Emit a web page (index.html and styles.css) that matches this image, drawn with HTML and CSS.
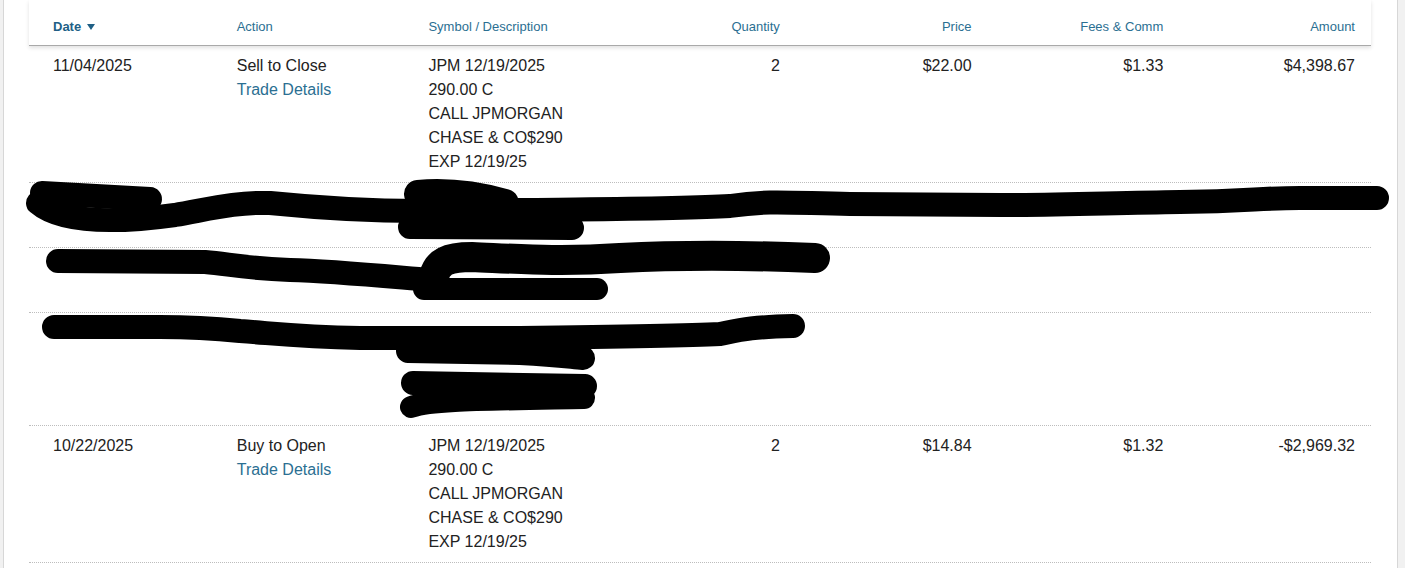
FILE: index.html
```html
<!DOCTYPE html>
<html lang="en">
<head>
<meta charset="utf-8">
<title>Transactions</title>
<link rel="stylesheet" href="styles.css">
</head>
<body>
<div class="panel">
  <div class="grid head">
    <div class="c first sorted">Date <svg class="caret" width="8" height="6" viewBox="0 0 8 6"><path d="M0 0H8L4 6Z" fill="#1f5f85"/></svg></div>
    <div class="c">Action</div>
    <div class="c">Symbol / Description</div>
    <div class="c r">Quantity</div>
    <div class="c r">Price</div>
    <div class="c r">Fees &amp; Comm</div>
    <div class="c r">Amount</div>
  </div>

  <div class="grid row">
    <div class="c first">11/04/2025</div>
    <div class="c">Sell to Close<br><a class="link" href="#">Trade Details</a></div>
    <div class="c">JPM 12/19/2025<br>290.00 C<br>CALL JPMORGAN<br>CHASE &amp; CO$290<br>EXP 12/19/25</div>
    <div class="c r">2</div>
    <div class="c r">$22.00</div>
    <div class="c r">$1.33</div>
    <div class="c r">$4,398.67</div>
  </div>

  <div class="grid row lines2">
    <div class="c first"></div><div class="c"></div><div class="c"></div>
    <div class="c r"></div><div class="c r"></div><div class="c r"></div><div class="c r"></div>
  </div>

  <div class="grid row lines2">
    <div class="c first"></div><div class="c"></div><div class="c"></div>
    <div class="c r"></div><div class="c r"></div><div class="c r"></div><div class="c r"></div>
  </div>

  <div class="grid row lines4">
    <div class="c first"></div><div class="c"></div><div class="c"></div>
    <div class="c r"></div><div class="c r"></div><div class="c r"></div><div class="c r"></div>
  </div>

  <div class="grid row">
    <div class="c first">10/22/2025</div>
    <div class="c">Buy to Open<br><a class="link" href="#">Trade Details</a></div>
    <div class="c">JPM 12/19/2025<br>290.00 C<br>CALL JPMORGAN<br>CHASE &amp; CO$290<br>EXP 12/19/25</div>
    <div class="c r">2</div>
    <div class="c r">$14.84</div>
    <div class="c r">$1.32</div>
    <div class="c r">-$2,969.32</div>
  </div>
</div>

<svg class="scribble" width="1405" height="568" viewBox="0 0 1405 568" aria-hidden="true">
  <g fill="none" stroke="#000" stroke-linecap="round" stroke-linejoin="round">
    <!-- row 2 -->
    <path stroke-width="24" d="M42 193 L150 199"/>
    <path stroke-width="24" d="M38 203 C60 222 110 224 175 215 C210 209 235 202 270 203 C320 208 360 211 420 211 L520 210 C600 209 680 209 730 206 C770 200 790 203 850 204 L1000 205 C1060 205 1110 203 1180 202 C1250 201 1260 198 1300 198 L1377 198"/>
    <path stroke-width="28" d="M418 194 C450 191 480 196 505 203"/>
    <path stroke-width="24" d="M410 227 L572 228"/>
    <!-- row 3 -->
    <path stroke-width="24" d="M58 261 L205 262 C230 264 240 268 290 270 C330 271 360 274 430 280"/>
    <path stroke-width="30" d="M434 276 C438 262 447 257 472 257 C520 259 560 262 620 258 C680 255 740 255 815 258"/>
    <path stroke-width="22" d="M424 289 L597 289"/>
    <!-- row 4 -->
    <path stroke-width="24" d="M54 327 L160 327 C200 327 220 329 240 331 C280 334 300 337 360 338 L520 338 C600 337 680 336 720 334 C740 330 750 327 793 326"/>
    <path stroke-width="24" d="M408 351 L520 353 C560 355 570 357 583 358"/>
    <path stroke-width="24" d="M413 383 L585 386"/>
    <path stroke-width="22" d="M411 407 C430 400 470 400 584 398"/>
  </g>
</svg>
</body>
</html>
```

FILE: styles.css
```css
html, body {
  margin: 0;
  padding: 0;
}

body {
  background: #f1f1f1;
  font-family: "Liberation Sans", Arial, sans-serif;
  color: #222;
  position: relative;
  height: 568px;
  overflow: hidden;
}

.panel {
  margin-left: 3px;
  width: 1344px;
  min-height: 568px;
  padding: 0 24px 0 25px;
  background: #fff;
  border-left: 1px solid #d7d7d7;
  border-right: 1px solid #d7d7d7;
}

.grid {
  display: grid;
  grid-template-columns: repeat(7, 1fr);
  width: 1342px;
}

.c {
  padding: 0 16px;
  min-width: 0;
}

.c.first {
  padding-left: 24px;
}

.c.r {
  text-align: right;
}

.head {
  font-size: 13px;
  line-height: 15px;
  color: #2b6f92;
  border-bottom: 1px solid #a9a9a9;
  box-shadow: 0 2px 4px rgba(0, 0, 0, 0.12);
  position: relative;
}

.head .c {
  padding-top: 19px;
  padding-bottom: 11px;
}

.head .sorted {
  font-weight: bold;
  color: #215f86;
}

.caret {
  margin-left: 2px;
  vertical-align: 1px;
}

.row {
  font-size: 16px;
  line-height: 24px;
  border-bottom: 1px dotted #bdbdbd;
}

.row .c {
  padding-top: 8px;
  padding-bottom: 8px;
}

.row.lines2 .c {
  min-height: 48px;
}

.row.lines4 .c {
  min-height: 96px;
}

.link {
  color: #2b6f92;
  text-decoration: none;
}

.scribble {
  position: absolute;
  left: 0;
  top: 0;
  pointer-events: none;
}
```
